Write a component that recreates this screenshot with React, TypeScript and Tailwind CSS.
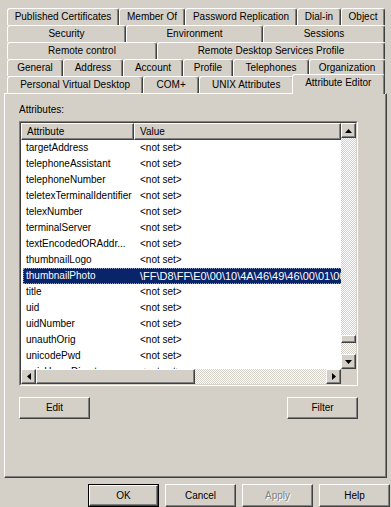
import React from "react";

const raised =
  "border border-t-white border-l-white border-r-[#404040] border-b-[#404040] shadow-[inset_-1px_-1px_0_#808080]";
const checker =
  "bg-[image:repeating-conic-gradient(#ffffff_0%_25%,#d4d0c8_0%_50%)] bg-[length:2px_2px]";

const tabRows: [string, string][][] = [
  [
    ["Published Certificates", "w-[112px]"],
    ["Member Of", "w-[66px]"],
    ["Password Replication", "w-[112px]"],
    ["Dial-in", "w-[44px]"],
    ["Object", "w-[44px]"],
  ],
  [
    ["Security", "w-[119px]"],
    ["Environment", "w-[137px]"],
    ["Sessions", "w-[122px]"],
  ],
  [
    ["Remote control", "w-[150px]"],
    ["Remote Desktop Services Profile", "w-[228px]"],
  ],
  [
    ["General", "w-[56px]"],
    ["Address", "w-[60px]"],
    ["Account", "w-[60px]"],
    ["Profile", "w-[50px]"],
    ["Telephones", "w-[76px]"],
    ["Organization", "w-[76px]"],
  ],
  [
    ["Personal Virtual Desktop", "w-[137px]"],
    ["COM+", "w-[56px]"],
    ["UNIX Attributes", "w-[95px]"],
  ],
];

const attributes: [string, string][] = [
  ["targetAddress", "<not set>"],
  ["telephoneAssistant", "<not set>"],
  ["telephoneNumber", "<not set>"],
  ["teletexTerminalIdentifier", "<not set>"],
  ["telexNumber", "<not set>"],
  ["terminalServer", "<not set>"],
  ["textEncodedORAddr...", "<not set>"],
  ["thumbnailLogo", "<not set>"],
  ["thumbnailPhoto", "\\FF\\D8\\FF\\E0\\00\\10\\4A\\46\\49\\46\\00\\01\\00"],
  ["title", "<not set>"],
  ["uid", "<not set>"],
  ["uidNumber", "<not set>"],
  ["unauthOrig", "<not set>"],
  ["unicodePwd", "<not set>"],
  ["unixHomeDirectory", "<not set>"],
];

function Arrow({ dir }: { dir: "up" | "down" | "left" | "right" }) {
  const pts = {
    up: "3.5,0 7,4 0,4",
    down: "0,0 7,0 3.5,4",
    left: "4,0 4,7 0,3.5",
    right: "0,0 4,3.5 0,7",
  }[dir];
  const vertical = dir === "up" || dir === "down";
  return (
    <svg width={vertical ? 7 : 4} height={vertical ? 4 : 7} viewBox={vertical ? "0 0 7 4" : "0 0 4 7"}>
      <polygon points={pts} fill="#000" />
    </svg>
  );
}

function ScrollButton({ dir }: { dir: "up" | "down" | "left" | "right" }) {
  return (
    <div className={`w-[15px] h-[15px] shrink-0 bg-[#d4d0c8] flex items-center justify-center ${raised}`}>
      <Arrow dir={dir} />
    </div>
  );
}

function Button({ label, className = "" }: { label: string; className?: string }) {
  return (
    <div className={`w-[71px] h-[22px] bg-[#d4d0c8] flex items-center justify-center ${raised} ${className}`}>
      {label}
    </div>
  );
}

export default function App() {
  return (
    <div className="w-[391px] h-[507px] overflow-hidden bg-[#d4d0c8] pt-[8px] text-[10px] text-black font-['Liberation_Sans',Arial,sans-serif] leading-[12px]">
      {/* tab rows */}
      <div className="ml-[7px] w-[378px]">
        {tabRows.map((row, i) => (
          <div key={i} className="flex h-[17px]">
            {row.map(([label, w]) => (
              <div
                key={label}
                className={`${w} h-[17px] flex items-center justify-center whitespace-nowrap rounded-t-[3px] border-t border-l border-r border-t-white border-l-white border-r-[#404040] shadow-[inset_-1px_0_0_#808080]`}
              >
                {label}
              </div>
            ))}
            {i === tabRows.length - 1 && (
              <div className="relative z-10 -ml-[2px] -mt-[2px] w-[94px] h-[20px] bg-[#d4d0c8] flex items-center justify-center pb-[3px] whitespace-nowrap rounded-t-[3px] border-t border-l border-r border-t-white border-l-white border-r-[#404040] shadow-[inset_-1px_0_0_#808080]">
                Attribute Editor
              </div>
            )}
          </div>
        ))}
      </div>

      {/* page */}
      <div className={`ml-[4px] w-[383px] h-[385px] pt-[10px] pl-[14px] ${raised}`}>
        <div>Attributes:</div>

        <div className="mt-[5px] w-[339px] h-[265px] border border-t-[#808080] border-l-[#808080] border-r-white border-b-white">
          <div className="h-full border border-t-[#404040] border-l-[#404040] border-r-[#d4d0c8] border-b-[#d4d0c8] bg-white grid grid-cols-[1fr_15px] grid-rows-[1fr_15px]">
            <div className="overflow-hidden">
              <div className="flex h-[17px]">
                <div className={`w-[113px] h-[17px] pl-[5px] flex items-center bg-[#d4d0c8] ${raised}`}>Attribute</div>
                <div className={`flex-1 h-[17px] pl-[5px] flex items-center bg-[#d4d0c8] ${raised}`}>Value</div>
              </div>
              {attributes.map(([name, value]) => {
                const sel = name === "thumbnailPhoto";
                return (
                  <div key={name} className="h-[16px] flex">
                    <div
                      className={`flex flex-1 ml-[2px] ${
                        sel ? "bg-[#0a246a] text-white outline outline-1 outline-dotted outline-[#8f9bc4] -outline-offset-1" : ""
                      }`}
                    >
                      <div className="w-[111px] pl-[3px] flex items-center whitespace-nowrap overflow-hidden">{name}</div>
                      <div className={`flex-1 pl-[6px] flex items-center whitespace-nowrap overflow-hidden ${sel ? "text-[11px]" : ""}`}>
                        {value}
                      </div>
                    </div>
                  </div>
                );
              })}
            </div>

            {/* vertical scrollbar */}
            <div className="flex flex-col">
              <ScrollButton dir="up" />
              <div className={`h-[197px] ${checker}`} />
              <div className={`h-[8px] bg-[#d4d0c8] ${raised}`} />
              <div className={`flex-1 ${checker}`} />
              <ScrollButton dir="down" />
            </div>

            {/* horizontal scrollbar */}
            <div className="flex">
              <ScrollButton dir="left" />
              <div className={`w-[159px] h-[15px] bg-[#d4d0c8] ${raised}`} />
              <div className={`flex-1 ${checker}`} />
              <ScrollButton dir="right" />
            </div>
            <div className="bg-[#d4d0c8]" />
          </div>
        </div>

        <div className="mt-[11px] w-[339px] flex justify-between">
          <Button label="Edit" />
          <Button label="Filter" />
        </div>
      </div>

      {/* dialog buttons */}
      <div className="mt-[6px] pl-[88px] flex gap-[6px]">
        <div className="w-[71px] h-[23px] border border-black">
          <div className={`w-full h-full bg-[#d4d0c8] flex items-center justify-center ${raised}`}>OK</div>
        </div>
        <div className={`w-[71px] h-[23px] bg-[#d4d0c8] flex items-center justify-center ${raised}`}>Cancel</div>
        <div className={`w-[71px] h-[23px] bg-[#d4d0c8] flex items-center justify-center text-[#808080] [text-shadow:1px_1px_0_#fff] ${raised}`}>
          Apply
        </div>
        <div className={`w-[71px] h-[23px] bg-[#d4d0c8] flex items-center justify-center ${raised}`}>Help</div>
      </div>
    </div>
  );
}
